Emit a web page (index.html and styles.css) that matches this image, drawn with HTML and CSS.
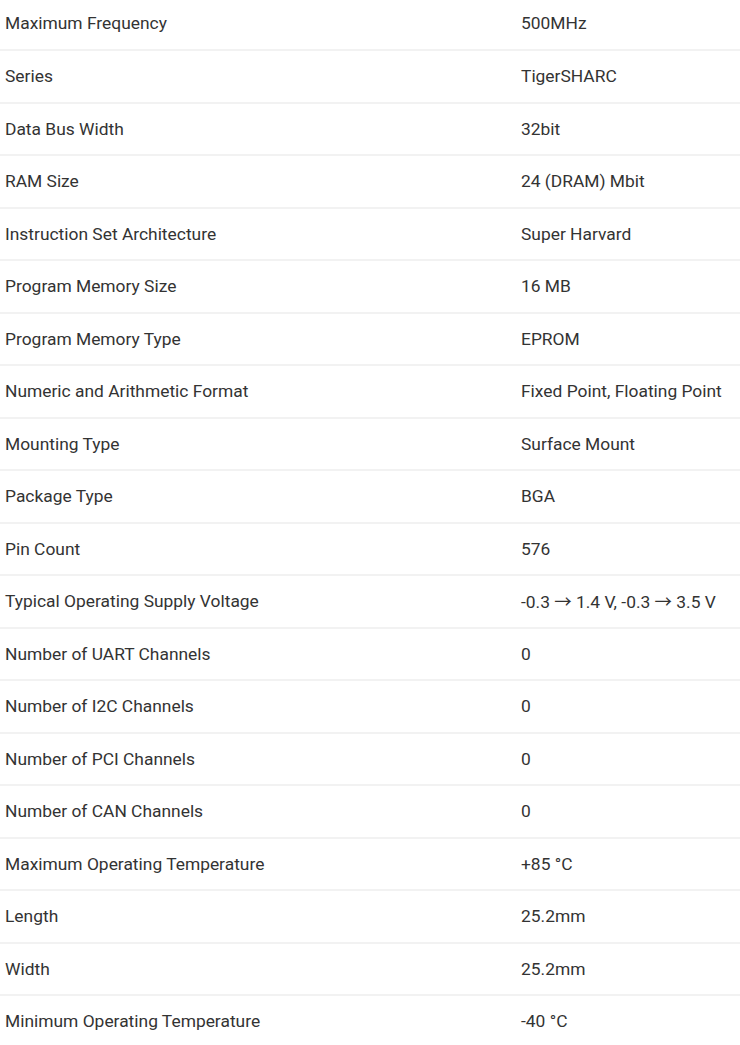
FILE: index.html
```html
<!DOCTYPE html>
<html>
<head>
<meta charset="utf-8">
<link rel="stylesheet" href="styles.css">
</head>
<body>
<table class="specs">
<tbody>
<tr><td class="k">Maximum Frequency</td><td class="v">500MHz</td></tr>
<tr><td class="k">Series</td><td class="v">TigerSHARC</td></tr>
<tr><td class="k">Data Bus Width</td><td class="v">32bit</td></tr>
<tr><td class="k">RAM Size</td><td class="v">24 (DRAM) Mbit</td></tr>
<tr><td class="k">Instruction Set Architecture</td><td class="v">Super Harvard</td></tr>
<tr><td class="k">Program Memory Size</td><td class="v">16 MB</td></tr>
<tr><td class="k">Program Memory Type</td><td class="v">EPROM</td></tr>
<tr><td class="k">Numeric and Arithmetic Format</td><td class="v">Fixed Point, Floating Point</td></tr>
<tr><td class="k">Mounting Type</td><td class="v">Surface Mount</td></tr>
<tr><td class="k">Package Type</td><td class="v">BGA</td></tr>
<tr><td class="k">Pin Count</td><td class="v">576</td></tr>
<tr><td class="k">Typical Operating Supply Voltage</td><td class="v">-0.3 <span class="arr">→</span> 1.4 V, -0.3 <span class="arr">→</span> 3.5 V</td></tr>
<tr><td class="k">Number of UART Channels</td><td class="v">0</td></tr>
<tr><td class="k">Number of I2C Channels</td><td class="v">0</td></tr>
<tr><td class="k">Number of PCI Channels</td><td class="v">0</td></tr>
<tr><td class="k">Number of CAN Channels</td><td class="v">0</td></tr>
<tr><td class="k">Maximum Operating Temperature</td><td class="v">+85 °C</td></tr>
<tr><td class="k">Length</td><td class="v">25.2mm</td></tr>
<tr><td class="k">Width</td><td class="v">25.2mm</td></tr>
<tr><td class="k">Minimum Operating Temperature</td><td class="v">-40 °C</td></tr>
</tbody>
</table>
</body>
</html>
```
FILE: styles.css
```css
html, body {
  margin: 0;
  padding: 0;
  background: #fff;
}
body {
  font-family: Roboto, "Liberation Sans", sans-serif;
  font-size: 17.4px;
  color: #333;
  overflow: hidden;
}
.specs {
  width: 740px;
  border-collapse: collapse;
  margin-top: -2.5px;
}
.specs tr {
  border-bottom: 2px solid #f2f2f2;
}
.specs td {
  height: 52.5px;
  padding: 0 5px;
  line-height: 22px;
  vertical-align: middle;
  box-sizing: border-box;
}
.specs .k {
  width: 516px;
}
.arr {
  font-family: "Noto Sans CJK SC", sans-serif;
}
```
